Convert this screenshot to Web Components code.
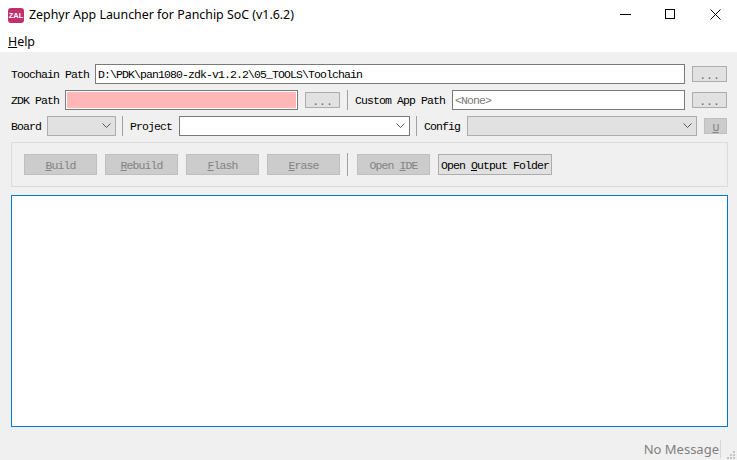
<!DOCTYPE html>
<html>
<head>
<meta charset="utf-8">
<title>Zephyr App Launcher</title>
<style>
  html, body { margin: 0; height: 100%; overflow: hidden; background: #f0f0f0; }
</style>
</head>
<body>
<zal-app></zal-app>
<script>
const MONO = `font-family: "Liberation Mono", "Noto Sans CJK SC", monospace; font-size: 11.5px; letter-spacing: -0.9px;`

class ZalTitlebar extends HTMLElement {
  constructor() {
    super()
    this.attachShadow({ mode: 'open' }).innerHTML = `
      <style>
        :host { display: flex; align-items: center; height: 30px; padding-right: 16px; background: #fff; color: #000; font: 12.4px/16px "Noto Sans", sans-serif; }
        .logo { flex: none; width: 16px; height: 15px; margin: 0 5px 0 8px; border-radius: 3px; background: #c0306f; color: #fff; font: bold 7.5px/15px "Liberation Sans", sans-serif; text-align: center; }
        .title { flex: 1; white-space: nowrap; }
        .ctl { flex: none; align-self: flex-start; width: 45px; height: 29px; display: flex; align-items: center; justify-content: flex-end; }
        svg { display: block; }
      </style>
      <div class="logo">ZAL</div>
      <div class="title"><slot></slot></div>
      <div class="ctl"><svg width="11" height="11" viewBox="0 0 11 11"><path d="M0 5.5H11" stroke="#000"/></svg></div>
      <div class="ctl"><svg width="11" height="11" viewBox="0 0 11 11"><rect x=".5" y=".5" width="9" height="9" fill="none" stroke="#000"/></svg></div>
      <div class="ctl"><svg width="11" height="11" viewBox="0 0 11 11"><path d="M.5 .5L10.5 10.5M10.5 .5L.5 10.5" stroke="#000" stroke-width="1"/></svg></div>
    `
  }
}

class ZalMenubar extends HTMLElement {
  constructor() {
    super()
    this.attachShadow({ mode: 'open' }).innerHTML = `
      <style>
        :host { display: flex; align-items: center; height: 22px; padding: 1px 0 0 8px; box-sizing: border-box; background: #fff; color: #000; font: 12.4px/16px "Noto Sans", sans-serif; }
      </style>
      <slot></slot>
    `
  }
}

class ZalLabel extends HTMLElement {
  constructor() {
    super()
    this.attachShadow({ mode: 'open' }).innerHTML = `
      <style>
        :host { display: block; flex: none; ${MONO} color: #000; white-space: nowrap; height: 20px; line-height: 22px; }
      </style>
      <slot></slot>
    `
  }
}

class ZalInput extends HTMLElement {
  constructor() {
    super()
    this.attachShadow({ mode: 'open' }).innerHTML = `
      <style>
        :host { display: block; flex: none; box-sizing: border-box; height: 20px; border: 1px solid #7a7a7a; background: #fff; padding-left: 2px; ${MONO} line-height: 20px; color: #000; white-space: nowrap; overflow: hidden; }
        :host([hint]) { color: #7a7a7a; }
        :host([error]) { background: #ffb6b6; border-color: #7a7a7a; box-shadow: inset 0 0 0 1px #fff; }
      </style>
      <slot></slot>
    `
  }
}

class ZalCombo extends HTMLElement {
  constructor() {
    super()
    this.attachShadow({ mode: 'open' }).innerHTML = `
      <style>
        :host { display: flex; align-items: center; justify-content: flex-end; flex: none; box-sizing: border-box; height: 20px; border: 1px solid #7a7a7a; background: #fff; padding-right: 4px; }
        :host([disabled]) { background: #e1e1e1; border-color: #adadad; }
        svg { display: block; }
      </style>
      <svg width="9" height="6" viewBox="0 0 9 6"><path d="M.5 .5L4.5 4.5L8.5 .5" fill="none" stroke="#555"/></svg>
    `
  }
}

class ZalButton extends HTMLElement {
  constructor() {
    super()
    this.attachShadow({ mode: 'open' }).innerHTML = `
      <style>
        :host { display: flex; align-items: center; justify-content: center; flex: none; box-sizing: border-box; padding-top: 2px; border: 1px solid #adadad; background: #e1e1e1; ${MONO} color: #000; white-space: nowrap; }
        :host([disabled]) { background: #ccc; border-color: #bfbfbf; color: #838383; }
      </style>
      <slot></slot>
    `
  }
}

class ZalSep extends HTMLElement {
  constructor() {
    super()
    this.attachShadow({ mode: 'open' }).innerHTML = `
      <style>
        :host { display: block; flex: none; box-sizing: border-box; width: 1px; height: 20px; background: #a0a0a0; }
      </style>
    `
  }
}

class ZalStatusbar extends HTMLElement {
  constructor() {
    super()
    this.attachShadow({ mode: 'open' }).innerHTML = `
      <style>
        :host { display: flex; align-items: center; justify-content: flex-end; height: 22px; color: #7f7f7f; font: 13px/16px "Noto Sans", sans-serif; }
        .sep { width: 1px; height: 18px; margin: 0 0 0 1px; background: #d7d7d7; }
        .grip { width: 16px; height: 20px; align-self: flex-end; display: flex; align-items: flex-end; justify-content: flex-end; }
        svg { display: block; }
      </style>
      <slot></slot>
      <div class="sep"></div>
      <div class="grip"><svg width="10" height="10" viewBox="0 0 10 10" fill="#c4c4c4"><rect x="6" y="1" width="2" height="2"/><rect x="3" y="4" width="2" height="2"/><rect x="6" y="4" width="2" height="2"/><rect x="0" y="7" width="2" height="2"/><rect x="3" y="7" width="2" height="2"/><rect x="6" y="7" width="2" height="2"/></svg></div>
    `
  }
}

class ZalApp extends HTMLElement {
  constructor() {
    super()
    this.attachShadow({ mode: 'open' }).innerHTML = `
      <style>
        :host { display: flex; flex-direction: column; height: 460px; background: #f0f0f0; }
        .form { display: flex; flex-direction: column; gap: 6px; padding: 12px 10px 0 11px; }
        .row { display: flex; align-items: center; height: 20px; }
        .small { width: 35px; height: 16px; color: #666; letter-spacing: 0; }
        .group { box-sizing: border-box; height: 45px; margin: 6px 9px 0 11px; border: 1px solid #dcdcdc; padding: 0 12px; display: flex; align-items: center; gap: 8px; }
        .tool { width: 73px; height: 21px; }
        .log { flex: 1; margin: 8px 9px 0 11px; background: #fff; border: 1px solid #0078d7; }
      </style>
      <zal-titlebar>Zephyr App Launcher for Panchip SoC (v1.6.2)</zal-titlebar>
      <zal-menubar><span><u>H</u>elp</span></zal-menubar>
      <div class="form">
        <div class="row">
          <zal-label style="width:84px">Toochain Path</zal-label>
          <zal-input style="width:590px">D:\\PDK\\pan1080-zdk-v1.2.2\\05_TOOLS\\Toolchain</zal-input>
          <zal-button class="small" style="margin-left:7px">...</zal-button>
        </div>
        <div class="row">
          <zal-label style="width:54px">ZDK Path</zal-label>
          <zal-input error style="width:233px"></zal-input>
          <zal-button class="small" style="margin-left:7px">...</zal-button>
          <zal-sep style="margin-left:7px"></zal-sep>
          <zal-label style="width:97px;margin-left:7px">Custom App Path</zal-label>
          <zal-input hint style="width:233px">&lt;None&gt;</zal-input>
          <zal-button class="small" style="margin-left:7px">...</zal-button>
        </div>
        <div class="row">
          <zal-label style="width:36px">Board</zal-label>
          <zal-combo disabled style="width:69px"></zal-combo>
          <zal-sep style="margin-left:6px"></zal-sep>
          <zal-label style="width:49px;margin-left:7px">Project</zal-label>
          <zal-combo style="width:231px"></zal-combo>
          <zal-sep style="margin-left:6px"></zal-sep>
          <zal-label style="width:43px;margin-left:7px">Config</zal-label>
          <zal-combo disabled style="width:230px"></zal-combo>
          <zal-button disabled style="width:23px;height:16px;margin-left:7px"><u>U</u></zal-button>
        </div>
      </div>
      <div class="group">
        <zal-button disabled class="tool"><span><u>B</u>uild</span></zal-button>
        <zal-button disabled class="tool"><span><u>R</u>ebuild</span></zal-button>
        <zal-button disabled class="tool"><span><u>F</u>lash</span></zal-button>
        <zal-button disabled class="tool"><span><u>E</u>rase</span></zal-button>
        <zal-sep style="height:23px;margin:0 1px 0 -1px"></zal-sep>
        <zal-button disabled class="tool"><span>Open <u>I</u>DE</span></zal-button>
        <zal-button class="tool" style="width:114px"><span>Open <u>O</u>utput Folder</span></zal-button>
      </div>
      <div class="log"></div>
      <zal-statusbar style="margin-top:11px">No Message</zal-statusbar>
    `
  }
}

customElements.define('zal-titlebar', ZalTitlebar)
customElements.define('zal-menubar', ZalMenubar)
customElements.define('zal-label', ZalLabel)
customElements.define('zal-input', ZalInput)
customElements.define('zal-combo', ZalCombo)
customElements.define('zal-button', ZalButton)
customElements.define('zal-sep', ZalSep)
customElements.define('zal-statusbar', ZalStatusbar)
customElements.define('zal-app', ZalApp)
</script>
</body>
</html>
